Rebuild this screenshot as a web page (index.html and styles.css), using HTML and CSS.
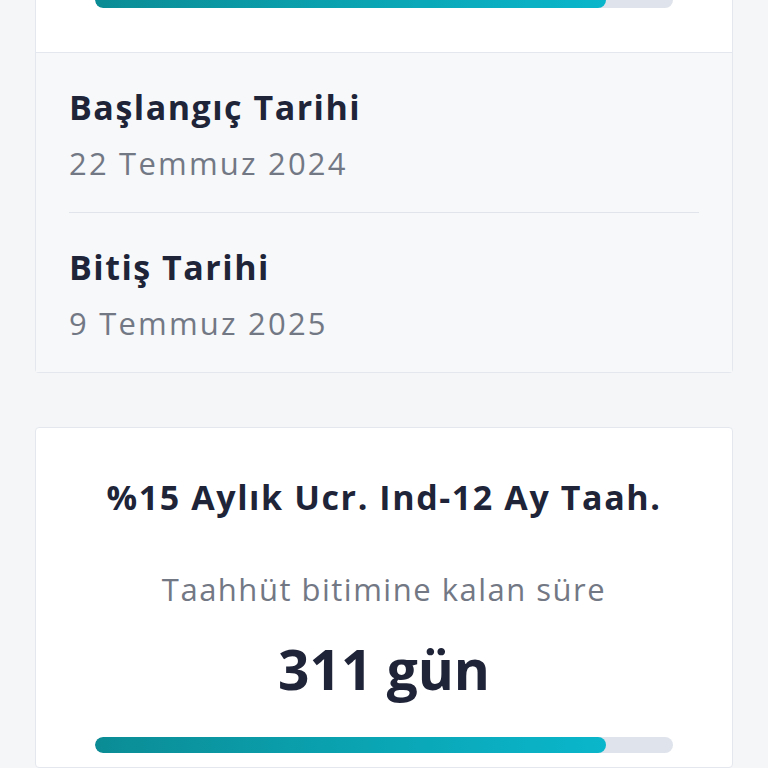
FILE: index.html
```html
<!DOCTYPE html>
<html lang="tr">
<head>
<meta charset="utf-8">
<title>Taahhüt</title>
<link rel="stylesheet" href="styles.css">
</head>
<body>
<main class="page">
  <section class="card card-top">
    <div class="card-body">
      <div class="track"><div class="fill" style="width: 88.4%"></div></div>
    </div>
    <div class="dates">
      <div class="date-item">
        <div class="date-label">Başlangıç Tarihi</div>
        <div class="date-value">22 Temmuz 2024</div>
      </div>
      <div class="date-item">
        <div class="date-label">Bitiş Tarihi</div>
        <div class="date-value">9 Temmuz 2025</div>
      </div>
    </div>
  </section>

  <section class="card card-plan">
    <div class="plan-body">
      <h2 class="plan-title">%15 Aylık Ucr. Ind-12 Ay Taah.</h2>
      <p class="plan-sub">Taahhüt bitimine kalan süre</p>
      <p class="plan-days">311 gün</p>
      <div class="track"><div class="fill" style="width: 88.4%"></div></div>
    </div>
  </section>
</main>
</body>
</html>
```

FILE: styles.css
```css
html, body {
  margin: 0;
  padding: 0;
  background: #f5f6f8;
  font-family: "Open Sans", "Lato", "Liberation Sans", sans-serif;
  color: #202438;
}

.page {
  padding: 0 35px;
  margin-top: -8px;
  display: flex;
  flex-direction: column;
  gap: 54px;
}

.card {
  background: #ffffff;
  border: 1px solid #e4e7ed;
  border-radius: 4px;
}

.card-top {
  border-top: none;
  border-top-left-radius: 0;
  border-top-right-radius: 0;
}

.card-body {
  padding: 0 59px 44px;
}

.track {
  height: 16px;
  border-radius: 8px;
  background: #dfe3eb;
  overflow: hidden;
}

.fill {
  height: 100%;
  border-radius: 8px;
  background: linear-gradient(90deg, #0b8c95 0%, #0aa5b4 55%, #0ab6cb 100%);
}

.dates {
  background: #f7f8fa;
  border-top: 1px solid #e4e7ed;
  padding: 0 33px;
}

.date-item {
  padding: 34px 0 29px;
  display: flex;
  flex-direction: column;
  gap: 16px;
}

.date-item + .date-item {
  border-top: 1px solid #e1e4ea;
}

.date-label {
  font-size: 34px;
  line-height: 40px;
  font-weight: 700;
  letter-spacing: 1.5px;
  color: #202438;
}

.date-value {
  font-size: 31px;
  line-height: 40px;
  font-weight: 400;
  letter-spacing: 2.2px;
  color: #737885;
}

.plan-body {
  padding: 47px 59px 14px;
  display: flex;
  flex-direction: column;
  align-items: stretch;
  text-align: center;
}

.plan-title {
  margin: 0;
  font-size: 34px;
  line-height: 44px;
  font-weight: 700;
  letter-spacing: 1.6px;
  color: #202438;
}

.plan-sub {
  margin: 50px 0 0;
  font-size: 31px;
  line-height: 40px;
  font-weight: 400;
  letter-spacing: 1.5px;
  color: #737885;
}

.plan-days {
  margin: 30px 0 38px;
  font-size: 55px;
  line-height: 60px;
  font-weight: 700;
  color: #202438;
}
```
